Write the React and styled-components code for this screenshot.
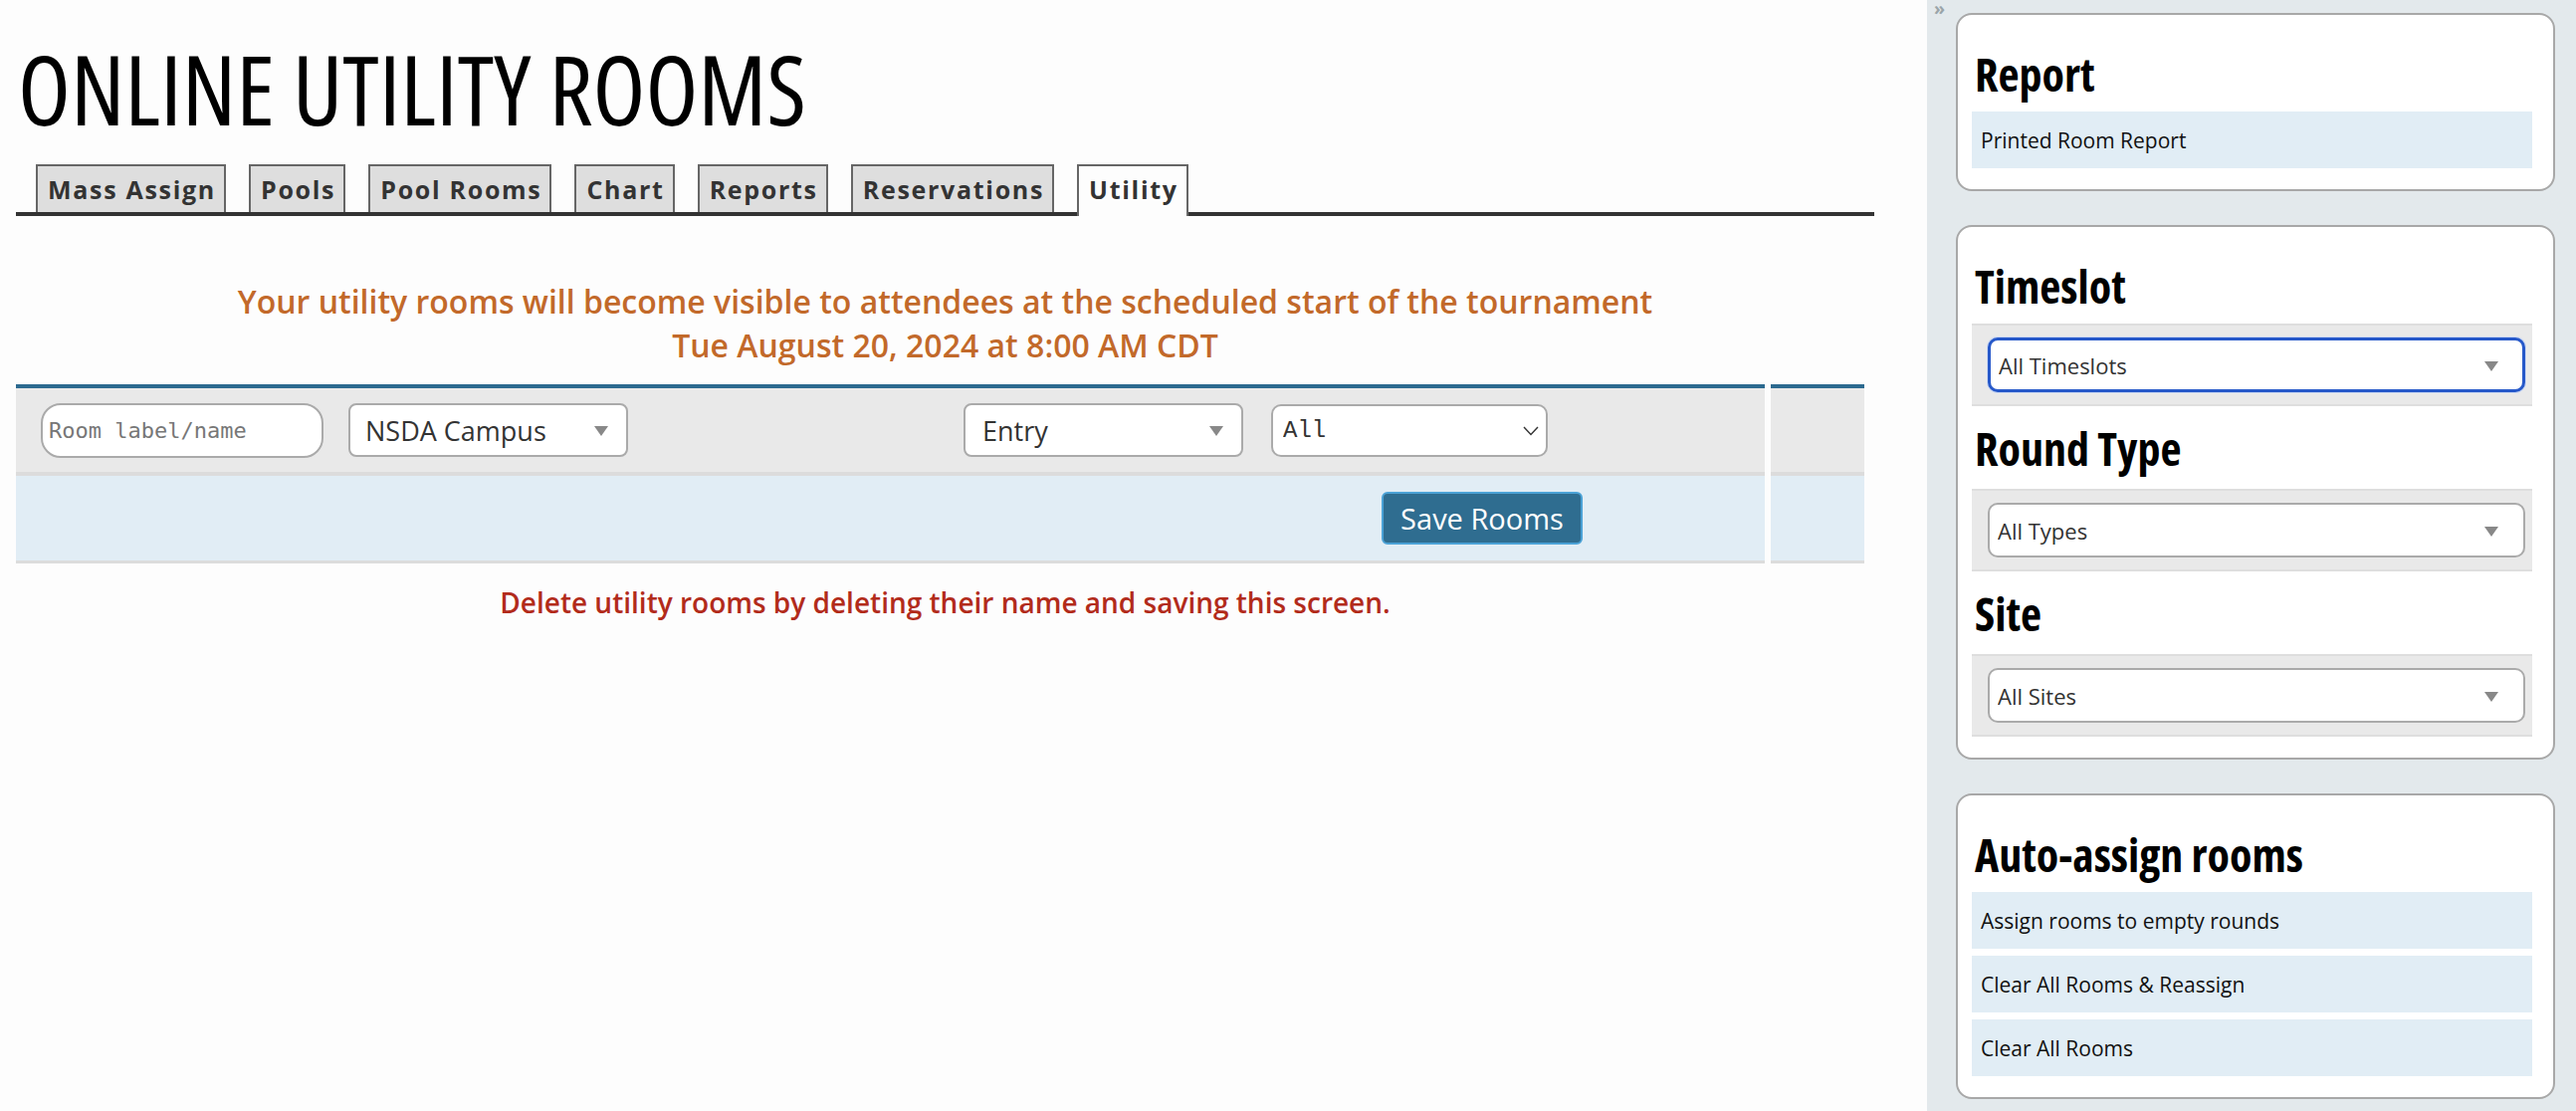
import React from 'react';
import styled, { createGlobalStyle, css } from 'styled-components';

const GlobalStyle = createGlobalStyle`
  html, body {
    margin: 0;
    padding: 0;
  }
  body {
    background: #fdfdfd;
    font-family: "Open Sans", "Liberation Sans", sans-serif;
  }
  * {
    box-sizing: border-box;
  }
`;

const Page = styled.div`
  display: flex;
  width: 100%;
  min-height: 100vh;
`;

const Main = styled.main`
  flex: 1;
  padding: 40px 53px 0 16px;
  background: #fdfdfd;
`;

const Title = styled.h1`
  margin: 0;
  padding-left: 2px;
  font-family: "Open Sans", "DejaVu Sans Condensed", sans-serif;
  font-stretch: 75%;
  font-size: 97px;
  font-weight: 500;
  line-height: 97px;
  color: #000;
`;

const TabBar = styled.nav`
  display: flex;
  align-items: flex-end;
  gap: 23px;
  margin-top: 28px;
  padding-left: 20px;
  border-bottom: 4px solid #333;
`;

const Tab = styled.div`
  display: flex;
  align-items: center;
  height: 48px;
  padding: 0 8px 0 10px;
  border: 2px solid #666;
  border-bottom: none;
  background: #dedede;
  color: #333;
  font-size: 25px;
  font-weight: 700;
  letter-spacing: 1.7px;

  ${props => props.active && css`
    height: 52px;
    margin-bottom: -4px;
    padding-bottom: 4px;
    background: #fdfdfd;
  `}
`;

const Notice = styled.div`
  margin-top: 64px;
  text-align: center;
  color: #c2692a;
  font-size: 32px;
  font-weight: 600;
  line-height: 44px;
`;

const RoomsTable = styled.div`
  display: grid;
  grid-template-columns: 1fr 94px;
  column-gap: 6px;
  margin: 17px 10px 0 0;
`;

const FilterCell = styled.div`
  display: flex;
  align-items: center;
  height: 92px;
  padding-left: 25px;
  background: #e9e9e9;
  border-top: 4px solid #2c6a8f;
  border-bottom: 4px solid #dcdcdc;
`;

const ActionCell = styled.div`
  display: flex;
  align-items: center;
  justify-content: flex-end;
  height: 88px;
  padding-right: ${props => props.inset || '0'};
  background: #e1edf5;
  border-bottom: 3px solid #dcdcdc;
`;

const NameInput = styled.input`
  width: 284px;
  height: 55px;
  padding: 0 6px;
  border: 2px solid #aaa;
  border-radius: 20px;
  background: #fff;
  font-family: "DejaVu Sans Mono", "Liberation Mono", monospace;
  font-size: 22px;
  color: #333;
  outline: none;

  &::placeholder {
    color: #777;
  }
`;

const SelectWrap = styled.div`
  position: relative;
  flex-shrink: 0;
  width: ${props => props.width || '100%'};
  margin-left: ${props => props.offset || '0'};
`;

const SelectBox = styled.select`
  appearance: none;
  width: 100%;
  height: ${props => props.height || '54px'};
  padding: 0 40px 0 ${props => props.pad || '15px'};
  border: 2px solid #aaa;
  border-radius: ${props => props.radius || '8px'};
  background: #fff;
  color: #333;
  font-family: ${props => props.mono ? '"Liberation Mono", monospace' : '"Open Sans", "Liberation Sans", sans-serif'};
  font-size: ${props => props.size || '27px'};
  outline: none;

  ${props => props.focused && css`
    border: 3px solid #2658c9;
    box-shadow: 0 0 0 1px #c9d6f2;
  `}
`;

const Arrow = styled.span`
  position: absolute;
  top: 50%;
  right: ${props => props.right || '20px'};
  display: flex;
  transform: translateY(-40%);
  pointer-events: none;
`;

const Triangle = ({ right }) => (
  <Arrow right={right}>
    <svg width="14" height="10" viewBox="0 0 14 10">
      <path d="M0 0 H14 L7 10 Z" fill="#888" />
    </svg>
  </Arrow>
);

const Chevron = () => (
  <Arrow right="9px">
    <svg width="16" height="10" viewBox="0 0 16 10">
      <path d="M1 1 L8 8.5 L15 1" fill="none" stroke="#333" strokeWidth="1.4" />
    </svg>
  </Arrow>
);

const SaveButton = styled.button`
  width: 202px;
  height: 53px;
  border: 2px solid #4ba2d6;
  border-radius: 6px;
  background: #2f6d90;
  color: #fff;
  font-family: "Open Sans", "Liberation Sans", sans-serif;
  font-size: 29px;
  cursor: pointer;
`;

const DeleteNote = styled.div`
  margin-top: 20px;
  text-align: center;
  color: #b22b1b;
  font-size: 28px;
  font-weight: 600;
  line-height: 38px;
`;

const Sidebar = styled.aside`
  position: relative;
  display: flex;
  flex-direction: column;
  gap: 34px;
  flex-shrink: 0;
  width: 652px;
  padding: 13px 21px 13px 29px;
  background: #e3e9ec;
`;

const Collapse = styled.span`
  position: absolute;
  top: 0;
  left: 7px;
  color: #9aa4a8;
  font-size: 18px;
  font-weight: 700;
  line-height: 16px;
`;

const Card = styled.section`
  padding: 0 21px 21px 14px;
  border: 2px solid #a8a8a8;
  border-radius: 16px;
  background: #fff;
`;

const CardHeading = styled.h4`
  margin: ${props => props.first ? '33px 0 12px' : '16px 0 15px'};
  padding-left: 3px;
  font-family: "Open Sans", "DejaVu Sans Condensed", sans-serif;
  font-stretch: 75%;
  font-size: 46px;
  font-weight: 700;
  line-height: 52px;
  color: #000;
`;

const LinkList = styled.div`
  display: flex;
  flex-direction: column;
  gap: 7px;
`;

const LinkRow = styled.a`
  display: flex;
  align-items: center;
  height: 57px;
  padding-left: 9px;
  background: #e1edf5;
  color: #111;
  font-size: 21px;
  text-decoration: none;
`;

const SelectRow = styled.div`
  padding: 12px 7px 12px 16px;
  background: #e9e9e9;
  border-top: 2px solid #dedede;
  border-bottom: 2px solid #dedede;
`;

const SideSelect = ({ value, focused }) => (
  <SelectWrap>
    <SelectBox height="55px" size="22px" pad="8px" radius="10px" focused={focused} defaultValue={value}>
      <option>{value}</option>
    </SelectBox>
    <Triangle right="27px" />
  </SelectWrap>
);

const tabs = ['Mass Assign', 'Pools', 'Pool Rooms', 'Chart', 'Reports', 'Reservations', 'Utility'];

const App = () => {
  return (
    <Page>
      <GlobalStyle />
      <Main>
        <Title>ONLINE UTILITY ROOMS</Title>

        <TabBar>
          {tabs.map(t => (
            <Tab key={t} active={t === 'Utility'}>{t}</Tab>
          ))}
        </TabBar>

        <Notice>
          Your utility rooms will become visible to attendees at the scheduled start of the tournament
          <br />
          Tue August 20, 2024 at 8:00 AM CDT
        </Notice>

        <RoomsTable>
          <FilterCell>
            <NameInput placeholder="Room label/name" />
            <SelectWrap width="281px" offset="25px">
              <SelectBox defaultValue="NSDA Campus">
                <option>NSDA Campus</option>
              </SelectBox>
              <Triangle />
            </SelectWrap>
            <SelectWrap width="281px" offset="337px">
              <SelectBox pad="17px" defaultValue="Entry">
                <option>Entry</option>
              </SelectBox>
              <Triangle />
            </SelectWrap>
            <SelectWrap width="278px" offset="28px">
              <SelectBox mono height="53px" size="24px" pad="10px" radius="10px" defaultValue="All">
                <option>All</option>
              </SelectBox>
              <Chevron />
            </SelectWrap>
          </FilterCell>
          <FilterCell />
          <ActionCell inset="183px">
            <SaveButton>Save Rooms</SaveButton>
          </ActionCell>
          <ActionCell />
        </RoomsTable>

        <DeleteNote>Delete utility rooms by deleting their name and saving this screen.</DeleteNote>
      </Main>

      <Sidebar>
        <Collapse>»</Collapse>

        <Card>
          <CardHeading first>Report</CardHeading>
          <LinkList>
            <LinkRow href="#">Printed Room Report</LinkRow>
          </LinkList>
        </Card>

        <Card>
          <CardHeading first>Timeslot</CardHeading>
          <SelectRow>
            <SideSelect value="All Timeslots" focused />
          </SelectRow>
          <CardHeading>Round Type</CardHeading>
          <SelectRow>
            <SideSelect value="All Types" />
          </SelectRow>
          <CardHeading>Site</CardHeading>
          <SelectRow>
            <SideSelect value="All Sites" />
          </SelectRow>
        </Card>

        <Card>
          <CardHeading first>Auto-assign rooms</CardHeading>
          <LinkList>
            <LinkRow href="#">Assign rooms to empty rounds</LinkRow>
            <LinkRow href="#">Clear All Rooms &amp; Reassign</LinkRow>
            <LinkRow href="#">Clear All Rooms</LinkRow>
          </LinkList>
        </Card>
      </Sidebar>
    </Page>
  );
};

export default App;
